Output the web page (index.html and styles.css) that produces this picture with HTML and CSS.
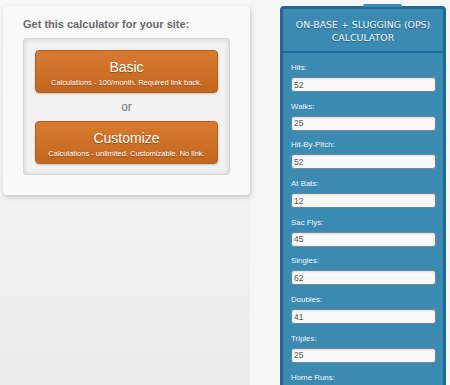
FILE: index.html
```html
<!DOCTYPE html>
<html lang="en">

<head>
    <meta charset="UTF-8">
    <meta name="viewport" content="width=device-width, initial-scale=1.0">
    <title>OPS Calculator</title>
    <link rel="stylesheet" href="styles.css">
</head>

<body>
    <div class="side">
        <div class="card">
            <h2 class="card-title">Get this calculator for your site:</h2>
            <div class="choices">
                <a class="btn" href="#">
                    <span class="btn-title">Basic</span>
                    <span class="btn-sub">Calculations - 100/month. Required link back.</span>
                </a>
                <div class="or">or</div>
                <a class="btn" href="#">
                    <span class="btn-title">Customize</span>
                    <span class="btn-sub">Calculations - unlimited. Customizable. No link.</span>
                </a>
            </div>
        </div>
    </div>

    <div class="calc">
        <div class="calc-head">ON-BASE + SLUGGING (OPS)<br>CALCULATOR</div>
        <div class="calc-body">
            <div class="field">
                <label>Hits:</label>
                <input type="text" value="52">
            </div>
            <div class="field">
                <label>Walks:</label>
                <input type="text" value="25">
            </div>
            <div class="field">
                <label>Hit-By-Pitch:</label>
                <input type="text" value="52">
            </div>
            <div class="field">
                <label>At Bats:</label>
                <input type="text" value="12">
            </div>
            <div class="field">
                <label>Sac Flys:</label>
                <input type="text" value="45">
            </div>
            <div class="field">
                <label>Singles:</label>
                <input type="text" value="62">
            </div>
            <div class="field">
                <label>Doubles:</label>
                <input type="text" value="41">
            </div>
            <div class="field">
                <label>Triples:</label>
                <input type="text" value="25">
            </div>
            <div class="field">
                <label>Home Runs:</label>
                <input type="text" value="10">
            </div>
        </div>
    </div>
</body>
</html>
```

FILE: styles.css
```css
body {
    margin: 0;
    display: flex;
    align-items: flex-start;
    height: 385px;
    overflow: hidden;
    background-color: #f6f6f6;
    font-family: 'Liberation Sans', Arial, sans-serif;
}

.side {
    width: 250px;
    height: 385px;
    padding: 6px 0 0 3px;
    box-sizing: border-box;
    background: linear-gradient(#f8f8f8, #f2f2f2 50%, #ebebeb);
}

.card {
    width: 247px;
    padding: 11.6px 20px 20px 20px;
    box-sizing: border-box;
    background: #f9f9f9;
    border-radius: 4px;
    box-shadow: 1px 2px 5px rgba(0, 0, 0, 0.18);
}

.card-title {
    margin: 0 0 7.4px 0;
    font-size: 11px;
    line-height: 13px;
    font-weight: bold;
    color: #6a6a6a;
}

.choices {
    padding: 11px 11px 10px 11px;
    background: #f2f2f2;
    border: 1px solid #d6d6d6;
    border-radius: 3px;
    box-shadow: inset 0 0 5px rgba(0, 0, 0, 0.15);
}

.btn {
    display: flex;
    flex-direction: column;
    align-items: center;
    height: 43px;
    padding-top: 8.2px;
    box-sizing: border-box;
    background: linear-gradient(#d87a2f, #c4661f);
    border: 1px solid #b95e1c;
    border-radius: 4px;
    box-shadow: 0 1px 2px rgba(0, 0, 0, 0.2);
    color: #ffffff;
    text-decoration: none;
    text-shadow: 0 1px 1px rgba(0, 0, 0, 0.3);
}

.btn-title {
    font-size: 14px;
    line-height: 16px;
}

.btn-sub {
    margin-top: 2.7px;
    font-size: 7.5px;
    line-height: 9px;
}

.or {
    height: 28px;
    line-height: 28px;
    text-align: center;
    font-size: 12px;
    color: #777777;
}

.calc {
    position: relative;
    width: 166px;
    margin: 6px 0 0 30px;
    box-sizing: border-box;
    background: #3b8ab2;
    border: 3px solid #1d6a98;
    border-bottom: none;
    border-radius: 4px 4px 0 0;
}

.calc:before {
    content: "";
    position: absolute;
    top: -5px;
    left: 80px;
    width: 39px;
    height: 3px;
    background: #3b8bb6;
    border-radius: 2px 2px 0 0;
}

.calc-head {
    padding: 8.5px 0 7.5px 0;
    text-align: center;
    font-family: 'DejaVu Sans', sans-serif;
    font-size: 9.4px;
    line-height: 13px;
    color: #f2f7fa;
    text-shadow: 0 1px 1px rgba(0, 0, 0, 0.3);
    border-bottom: 2px solid #1d6a98;
}

.calc-body {
    padding: 10px 7px 0 8px;
}

.field {
    margin-bottom: 9.7px;
}

.field label {
    display: block;
    margin-bottom: 4px;
    font-size: 7.9px;
    line-height: 10px;
    color: #f0f5f8;
}

.field input {
    display: block;
    width: 145px;
    height: 15px;
    margin: 0;
    padding: 0 2px;
    box-sizing: border-box;
    background: #f8f8f8;
    border: 1px solid #6e8797;
    border-radius: 3px;
    box-shadow: inset 0 1px 2px rgba(0, 0, 0, 0.1);
    font-family: 'Liberation Sans', Arial, sans-serif;
    font-size: 8.5px;
    color: #555555;
}
```
